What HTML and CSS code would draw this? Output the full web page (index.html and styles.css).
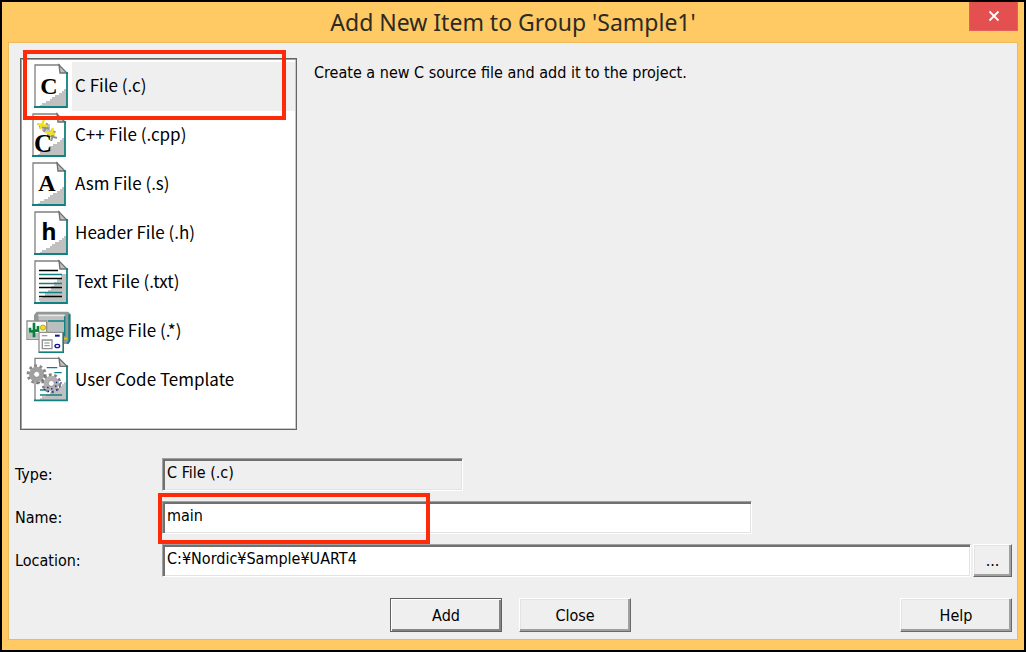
FILE: index.html
```html
<!DOCTYPE html>
<html lang="en">
<head>
<meta charset="utf-8">
<title>Add New Item to Group 'Sample1'</title>
<link rel="stylesheet" href="styles.css">
</head>
<body>
<svg class="defs" aria-hidden="true">
  <symbol id="page" viewBox="0 0 34 44" overflow="visible">
    <path d="M0 0H26L34 9V44H0Z" fill="#fff"/>
    <path d="M6 43V41H8V39H12V37H16V35H18V33H21V31H25V29H28V27H30V25H33V43Z" fill="#c0c0c0"/>
    <path d="M1 43V1H26" fill="none" stroke="#808080" stroke-width="1.3"/>
    <path d="M25 1L33 9H26Z" fill="#c0c0c0" stroke="#707070" stroke-width="1.3"/>
    <path d="M33 8V43H0" fill="none" stroke="#108080" stroke-width="1.8"/>
  </symbol>
</svg>
<main class="dialog">
  <header class="titlebar">
    <h1 class="title">Add New Item to Group 'Sample1'</h1>
    <button class="close" type="button" aria-label="Close window">
      <svg width="12" height="12" viewBox="0 0 12 12"><path d="M1.5 1.5L10.5 10.5M10.5 1.5L1.5 10.5" stroke="#fff" stroke-width="1.8"/></svg>
    </button>
  </header>
  <form class="content">
    <div class="picker">
      <div class="list-wrap">
        <ul class="list" role="listbox" aria-label="Item type">
          <li class="item" role="option" aria-selected="true">
            <svg class="icon" viewBox="0 0 46 49"><use href="#page" x="9" y="2" width="34" height="44"/><text class="serif" x="24" y="32" font-size="24">C</text></svg>
            <span class="name">C File (.c)</span>
          </li>
          <li class="item" role="option" aria-selected="false">
            <svg class="icon" viewBox="0 0 46 49"><use href="#page" x="7" y="2" width="34" height="44"/>
              <path d="M17 17h4v-4h4v6h4v6l-5-1-3-4h-4z" fill="#c0c0c0"/>
              <path d="M14 15.500l10 2M22 12l-3 9M22 24l10 3M30 20l-4 10" stroke="#909090" stroke-width="2"/>
              <path d="M12 13l10 2M19 9l-4 9M20 21l10 2M28 17l-4 9" stroke="#f0e020" stroke-width="2.400"/>
              <text class="serif" x="18" y="41" font-size="25">C</text></svg>
            <span class="name">C++ File (.cpp)</span>
          </li>
          <li class="item" role="option" aria-selected="false">
            <svg class="icon" viewBox="0 0 46 49"><use href="#page" x="7" y="2" width="34" height="44"/><text class="serif" x="22" y="31" font-size="24">A</text></svg>
            <span class="name">Asm File (.s)</span>
          </li>
          <li class="item" role="option" aria-selected="false">
            <svg class="icon" viewBox="0 0 46 49"><use href="#page" x="9" y="2" width="34" height="44"/><text class="sans" x="24" y="31" font-size="23">h</text></svg>
            <span class="name">Header File (.h)</span>
          </li>
          <li class="item" role="option" aria-selected="false">
            <svg class="icon" viewBox="0 0 46 49"><use href="#page" x="9" y="2" width="34" height="44"/>
              <path d="M14 43V40h3v-2h3v-3h3v-3h3v-4h3v-4h3v-4h4v-4h5V43Z" fill="#c0c0c0"/>
              <path d="M14 12.500h19M14 20.500h23M14 29.500h23M14 38.500h23" stroke="#000" stroke-width="1.500"/>
              <path d="M14 16.500h23M14 25.500h23M14 34.500h23" stroke="#108080" stroke-width="1.500"/></svg>
            <span class="name">Text File (.txt)</span>
          </li>
          <li class="item" role="option" aria-selected="false">
            <svg class="icon" viewBox="15 6 138 147">
              <path d="M42 30L50 20H145L152 28V105L145 117H125V80H42Z" fill="#909898"/>
              <path d="M148 28V108L142 116" stroke="#108080" stroke-width="6" fill="none"/>
              <path d="M55 31H134V92H60Z" fill="#c0c0c0"/>
              <path d="M55 31H134" stroke="#e8e8e8" stroke-width="5"/>
              <path d="M84 48H134M134 34V94" stroke="#108080" stroke-width="4"/>
              <path d="M88 51h43v25H88z" fill="#b8bfbf"/>
              <path d="M130 101h12" stroke="#e0c020" stroke-width="5"/>
              <path d="M21 48H80V103H21Z" fill="#fff" stroke="#909090" stroke-width="4"/>
              <path d="M23 84H55V101H23Z" fill="#c0c0c0"/>
              <path d="M42 53V97M30 68V79H42M54 63V77H42" stroke="#078040" stroke-width="8" fill="none"/>
              <circle cx="69" cy="68" r="8" fill="#f2dc18" stroke="#a09020" stroke-width="2"/>
              <path d="M57 82H129V141H57Z" fill="#fff" stroke="#909090" stroke-width="4"/>
              <path d="M130 82V142H56" stroke="#108080" stroke-width="4" fill="none"/>
              <path d="M65 92h17" stroke="#a0a0a0" stroke-width="4"/><path d="M105 92h14" stroke="#1010a0" stroke-width="6"/>
              <path d="M67 105H96V131H67Z" fill="#fff" stroke="#909090" stroke-width="4"/><path d="M73 114h16M73 122h16" stroke="#888" stroke-width="3"/>
              <ellipse cx="112" cy="123" rx="7" ry="5" fill="#fff" stroke="#1010a0" stroke-width="4"/></svg>
            <span class="name">Image File (.*)</span>
          </li>
          <li class="item" role="option" aria-selected="false">
            <svg class="icon" viewBox="15 153 138 147"><use href="#page" x="42" y="157" width="102" height="132"/>
              <path d="M80 188h32M103 203h22M60 255h20M60 270h66" stroke="#108080" stroke-width="4"/>
              <circle cx="50" cy="208" r="25" fill="none" stroke="#888" stroke-width="10" stroke-dasharray="8 7.7"/>
              <circle cx="50" cy="208" r="16" fill="none" stroke="#a0a0a0" stroke-width="14"/>
              <circle cx="50" cy="208" r="9" fill="#fff" stroke="#707070" stroke-width="2"/>
              <path d="M68 225l-8 7-14 3M73 211v8" stroke="#333" stroke-width="3" stroke-dasharray="4 5" fill="none"/>
              <circle cx="94" cy="235" r="25" fill="none" stroke="#808080" stroke-width="10" stroke-dasharray="8 7.7"/>
              <circle cx="94" cy="235" r="16" fill="none" stroke="#b0b0b0" stroke-width="14"/>
              <circle cx="94" cy="235" r="9" fill="#fff" stroke="#707070" stroke-width="2"/>
              <path d="M82 246q10 10 22 1t1-22M73 251q18 18 38 3t7-30" stroke="#181890" stroke-width="4" stroke-dasharray="4 9" fill="none"/></svg>
            <span class="name">User Code Template</span>
          </li>
        </ul>
      </div>
      <p class="hint">Create a new C source file and add it to the project.</p>
    </div>
    <div class="fields">
      <label for="type">Type:</label>
      <input class="box box-type" id="type" type="text" value="C File (.c)" readonly>
      <label for="name">Name:</label>
      <div class="name-wrap"><input class="box" id="name" type="text" value="main"></div>
      <label for="location">Location:</label>
      <div class="location">
        <input class="box" id="location" type="text" value="C:¥Nordic¥Sample¥UART4">
        <button class="btn browse" type="button">...</button>
      </div>
    </div>
    <div class="actions">
      <div class="main-actions">
        <button class="btn default" type="button">Add</button>
        <button class="btn" type="button">Close</button>
      </div>
      <button class="btn help" type="button">Help</button>
    </div>
  </form>
</main>
</body>
</html>
```
FILE: styles.css
```css
*, *::before, *::after { box-sizing: border-box; }
body {
  margin: 0;
  font-family: "DejaVu Sans Condensed", "Noto Sans", "Noto Sans CJK JP", sans-serif;
  font-size: 16px;
  color: #000;
}
.defs { position: absolute; width: 0; height: 0; }
.dialog {
  display: flex;
  flex-direction: column;
  min-height: 100vh;
  padding: 0 6px 10px;
  border: 2px solid #000;
  background: #ffc963;
}
.titlebar {
  position: relative;
  display: flex;
  align-items: center;
  justify-content: center;
  height: 40px;
}
.title {
  margin: 0;
  font-family: "Noto Sans", sans-serif;
  font-size: 23px;
  font-weight: 400;
  line-height: 40px;
  color: #2b2b26;
}
.close {
  position: absolute;
  top: 0;
  right: 0;
  display: flex;
  align-items: center;
  justify-content: center;
  width: 49px;
  height: 29px;
  padding: 0;
  border: 1px solid #e4605a;
  border-top: 0;
  background: #e44f50;
}
.content {
  flex: 1;
  padding-top: 15px;
  border: 1px solid #edbb5e;
  background: #efefef;
}
.picker {
  display: flex;
  gap: 17px;
  padding: 0 6px 0 11px;
}
.list-wrap { position: relative; flex: 0 0 277px; }
.list {
  margin: 0;
  padding: 3px 1px 24px;
  border: 1px solid #646464;
  background: #fff;
  box-shadow: inset 1px 1px #a0a0a0, inset -1px -1px #c8c8c8;
  list-style: none;
}
.list-wrap::after,
.name-wrap::after {
  content: "";
  position: absolute;
  border: 4px solid #ff2a08;
  pointer-events: none;
}
.list-wrap::after { left: 3px; top: -8px; right: 11px; height: 70px; }
.item { display: flex; height: 49px; padding-left: 3px; }
.icon { flex: none; width: 46px; height: 49px; margin-right: 1px; }
.icon text { font-weight: 700; text-anchor: middle; }
.serif { font-family: "Liberation Serif", serif; }
.sans { font-family: "Noto Sans", sans-serif; }
.name {
  flex: 1;
  padding: 0 0 4px 3px;
  font-family: "Noto Sans CJK JP", sans-serif;
  font-size: 17px;
  line-height: 45px;
}
.item[aria-selected="true"] .name { background: #efefef; }
.hint { margin: 5px 0 0; line-height: 20px; }
.fields {
  display: grid;
  grid-template-columns: 147px 1fr;
  row-gap: 10px;
  align-items: center;
  margin-top: 28px;
  padding: 0 5px 0 6px;
}
.box {
  display: block;
  width: 100%;
  height: 33px;
  padding: 0 4px 4px;
  border: 1px solid #a0a0a0;
  border-right-color: #fff;
  border-bottom-color: #fff;
  background: #fff;
  box-shadow: inset 2px 2px #707070, inset -1px -1px #e3e3e3;
  font: inherit;
  color: inherit;
}
.box-type { max-width: 301px; background: #efefef; }
.name-wrap { position: relative; max-width: 590px; }
.name-wrap::after { left: -4px; top: -8px; width: 272px; height: 51px; }
.location { display: flex; gap: 2px; }
.location .box { flex: 1; }
.btn {
  width: 112px;
  height: 34px;
  padding: 0;
  border: 1px solid #fff;
  border-right-color: #696969;
  border-bottom-color: #696969;
  background: #efefef;
  box-shadow: inset -2px -2px #a0a0a0, inset 1px 1px #e3e3e3;
  font: inherit;
  color: inherit;
}
.default {
  border-color: #606060;
  box-shadow: inset 1px 1px #fff, inset -2px -2px #858585;
}
.location .browse { width: 39px; height: 33px; }
.actions {
  display: grid;
  grid-template-columns: 1fr auto 1fr;
  margin-top: 21px;
  padding-right: 5px;
}
.main-actions { display: flex; grid-column: 2; gap: 17px; }
.help { justify-self: end; }
```
